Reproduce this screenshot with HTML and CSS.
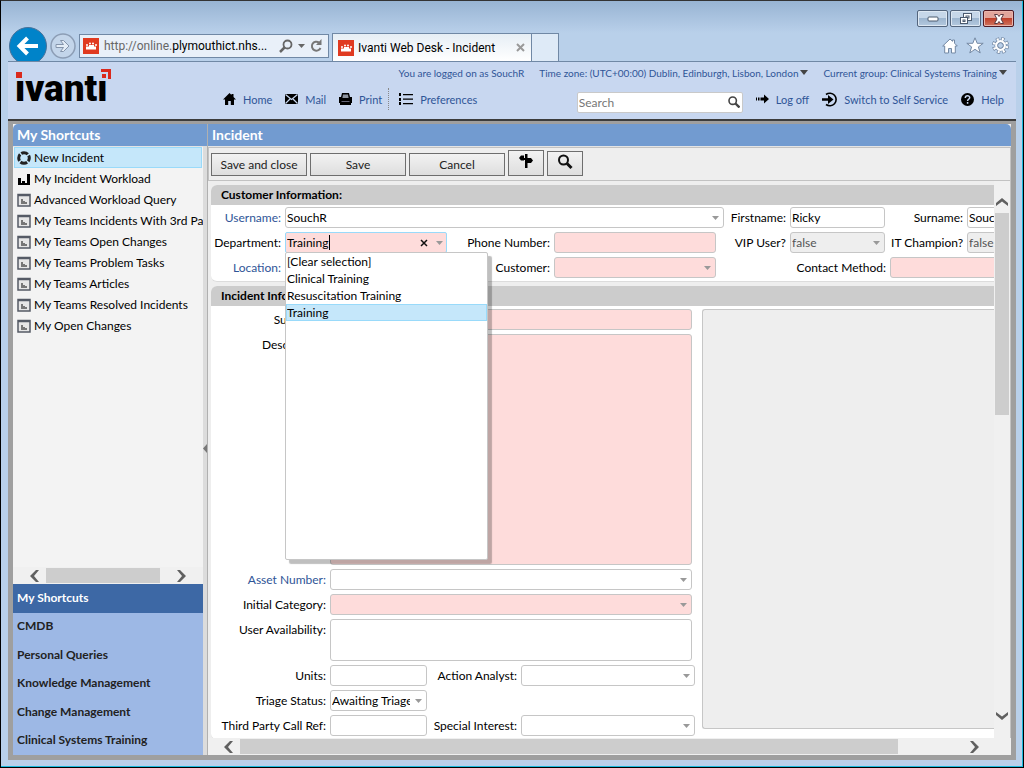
FILE: index.html
```html
<!DOCTYPE html>
<html lang="en">
  <head>
    <meta charset="UTF-8" />
    <meta name="viewport" content="width=device-width, initial-scale=1.0" />
    <title>Ivanti Web Desk - Incident</title>
    <link rel="stylesheet" href="styles.css">
  </head>
  <body>
    <div class="window">
      <div class="chrome">
        <div class="window-buttons">
          <button class="win-btn" aria-label="Minimize">
            <svg width="12" height="6"><rect x="1" y="1" width="10" height="4" rx="1" fill="#fff" stroke="#4b5a6e" /></svg>
          </button>
          <button class="win-btn" aria-label="Restore">
            <svg width="14" height="12" fill="#fff" stroke="#4b5a6e"><rect x="4.5" y=".5" width="8" height="7" /><rect x="7" y="3" width="3" height="2" /><rect x="1.500" y="4.500" width="7" height="6" /><rect x="4" y="7" width="2" height="1.500" /></svg>
          </button>
          <button class="win-btn win-close" aria-label="Close">
            <svg width="14" height="12"><path d="M2.500 1.500h3L7 3.500l1.500-2h3L9 6l2.500 4.500h-3L7 8.500l-1.500 2h-3L5 6z" fill="#fff" stroke="#5a3a42" /></svg>
          </button>
        </div>
        <div class="nav-row">
          <button class="back" aria-label="Back">
            <svg width="38" height="38" viewBox="0 0 38 38"><circle cx="19" cy="19" r="18.500" fill="#0083c9" stroke="#48729a" /><path d="M29 19H11M18.500 11l-8 8 8 8" fill="none" stroke="#fff" stroke-width="4" /></svg>
          </button>
          <button class="forward" aria-label="Forward">
            <svg width="26" height="26" viewBox="0 0 26 26"><circle cx="13" cy="13" r="12" fill="#c3d5ea" stroke="#8c9db5" stroke-width="1.500" /><path d="M6 11.500h7.500l-3-4h3l5.500 5.500-5.500 5.500h-3l3-4H6z" fill="#e4edf7" stroke="#8494ab" /></svg>
          </button>
          <div class="address">
            <svg class="favicon" width="16" height="16"><rect width="16" height="16" fill="#e03a20" /><g fill="#fff"><circle cx="4" cy="7" r="1" /><circle cx="7" cy="5.500" r="1" /><circle cx="10" cy="5.500" r="1" /><circle cx="13" cy="7" r="1" /><path d="M3 8.500h10v3H3zM6 7h5v3H6z" /></g></svg>
            <span class="url">http://online.<b>plymouthict.nhs...</b></span>
            <svg width="14" height="14" viewBox="0 0 14 14" fill="none" stroke="#666"><circle cx="8.500" cy="5.500" r="4" stroke-width="1.800" /><path d="M5.500 8.500L1 13" stroke-width="2.500" /></svg>
            <svg width="7" height="4"><path d="M0 0h7L3.500 4z" fill="#666" /></svg>
            <svg width="13" height="14" viewBox="0 0 13 14"><path d="M9 3.500A4.500 4.500 0 1 0 10.500 9" fill="none" stroke="#777" stroke-width="2" /><path d="M11.500 0v6H6z" fill="#777" /></svg>
          </div>
          <div class="tab">
            <svg class="favicon" width="16" height="16"><rect width="16" height="16" fill="#e03a20" /><g fill="#fff"><circle cx="4" cy="7" r="1" /><circle cx="7" cy="5.500" r="1" /><circle cx="10" cy="5.500" r="1" /><circle cx="13" cy="7" r="1" /><path d="M3 8.500h10v3H3zM6 7h5v3H6z" /></g></svg>
            <span class="tab-title">Ivanti Web Desk - Incident</span>
            <button class="plain" aria-label="Close tab"><svg width="9" height="9"><path d="M1 1l7 7M8 1L1 8" stroke="#999" stroke-width="2" /></svg></button>
          </div>
          <button class="new-tab" aria-label="New tab"></button>
          <div class="browser-tools">
            <button class="plain" aria-label="Home page"><svg width="16" height="16" viewBox="0 0 16 16"><path d="M8 1L.7 8h2v7h3.800v-4.500h3V15h3.800V8h2L12.500 5.200V2h-2v1.300z" fill="#fff" stroke="#7388a3" /></svg></button>
            <button class="plain" aria-label="Favorites"><svg width="18" height="17" viewBox="0 0 18 17"><path d="M9 .8l2.200 5.500h6l-4.800 3.600 1.800 6L9 12.300l-5.200 3.600 1.800-6L.8 6.300h6z" fill="#fff" stroke="#7388a3" /></svg></button>
            <button class="plain" aria-label="Tools"><svg width="17" height="17" viewBox="0 0 17 17"><circle cx="8.500" cy="8.500" r="6.500" fill="none" stroke="#7388a3" stroke-width="4" stroke-dasharray="3.105 2" /><circle cx="8.500" cy="8.500" r="6" fill="#7388a3" /><circle cx="8.500" cy="8.500" r="6.500" fill="none" stroke="#fff" stroke-width="2.600" stroke-dasharray="1.900 3.205" stroke-dashoffset="-.6" /><circle cx="8.500" cy="8.500" r="4.200" fill="none" stroke="#fff" stroke-width="2.400" /><circle cx="8.500" cy="8.500" r="2.800" fill="#b9cfe9" stroke="#7388a3" /></svg></button>
          </div>
        </div>
      </div>

      <div class="page">
        <header class="header">
          <svg class="logo" width="100" height="44" viewBox="0 0 100 44">
            <text x="0" y="34" class="logo-text">ivanti</text>
            <rect x="0" y="2" width="9" height="11" fill="#c8d7f0" />
            <rect x="83" y="0" width="15" height="13" fill="#c8d7f0" />
            <rect x="1" y="5" width="6" height="6" fill="#da291c" />
            <path d="M86 2h10v10h-3V5h-7zM87 7h4v4h-4z" fill="#da291c" />
          </svg>
          <div class="header-main">
            <div class="status">
              <span>You are logged on as SouchR</span>
              <button class="status-menu">Time zone: (UTC+00:00) Dublin, Edinburgh, Lisbon, London<svg width="8" height="5"><path d="M0 0h8L4 5z" fill="#444" /></svg></button>
              <button class="status-menu">Current group: Clinical Systems Training<svg width="8" height="5"><path d="M0 0h8L4 5z" fill="#444" /></svg></button>
            </div>
            <nav class="links">
              <a href="#"><svg width="13" height="12" viewBox="0 0 13 12"><path d="M6.500 0L0 6.500h2V12h3.200V8h2.600v4H11V6.500h2L10.500 4V1h-2v1z" /></svg>Home</a>
              <a href="#"><svg width="13" height="10" viewBox="0 0 13 10"><path d="M0 0h13v10H0z" /><path d="M.5.500l6 5 6-5M.5 9.500L5 5M12.500 9.500L8 5" fill="none" stroke="#c8d7f0" stroke-width="1.200" /></svg>Mail</a>
              <a href="#"><svg width="13" height="12" viewBox="0 0 13 12"><path d="M3 0h7l1 4h2v6h-1v2H1v-2H0V4h2z" /><path d="M4 1.500h5l.6 3.500H3.400z" fill="#8d949f" /><path d="M2.500 8.500h8" stroke="#667" /></svg>Print</a>
              <span class="divider"></span>
              <a href="#"><svg width="15" height="12" viewBox="0 0 15 12"><path d="M1 0h2v3H1zM1 5h2v3H1zM1 9h2v3H1zM5 1h10v1.300H5zM5 5.500h10v1.300H5zM5 10h10v1.300H5z" /></svg>Preferences</a>
              <div class="search">
                <input type="search" aria-label="Search" placeholder="Search" />
                <button class="plain" aria-label="Run search"><svg width="12" height="12" viewBox="0 0 12 12" fill="none" stroke="#444"><circle cx="4.700" cy="4.700" r="3.700" stroke-width="1.600" /><path d="M7.500 7.500l4 4" stroke-width="2.400" /></svg></button>
              </div>
              <a href="#"><svg width="13" height="10" viewBox="0 0 13 10"><path d="M0 3.500h1v3H0zM2 3.500h1.500v3H2zM4.500 3.500H8V.5L13 5 8 9.500v-3H4.500z" /></svg>Log off</a>
              <a href="#"><svg width="15" height="15" viewBox="0 0 15 15"><path d="M4 2.500A6.300 6.300 0 1 1 4 12.500" fill="none" stroke="#000" stroke-width="1.600" /><path d="M0 6.300h6V3l5.500 4.500L6 12V8.700H0z" /></svg>Switch to Self Service</a>
              <a href="#"><svg width="13" height="13" viewBox="0 0 13 13"><circle cx="6.500" cy="6.500" r="6.500" /><path d="M4.300 5c0-3 4.600-2.800 4.400-.3C8.600 6.300 6.600 6 6.600 8M6.600 9v1.700" fill="none" stroke="#c8d7f0" stroke-width="1.500" /></svg>Help</a>
            </nav>
          </div>
        </header>

        <div class="workspace">
          <aside class="sidebar">
            <h2 class="title">My Shortcuts</h2>
            <ul class="shortcuts">
              <li class="selected"><a href="#"><svg width="14" height="14" viewBox="0 0 14 14"><circle cx="7" cy="7" r="5.300" fill="none" stroke="#222" stroke-width="3" stroke-dasharray="7 1.325" stroke-dashoffset="3.500" /></svg>New Incident</a></li>
              <li><a href="#"><svg width="14" height="14" viewBox="0 0 14 14"><path d="M1 6h3v5h1V9h3v2h2V2h3v11H1z" /></svg>My Incident Workload</a></li>
              <li><a href="#"><svg width="14" height="14" viewBox="0 0 14 14"><use href="#query" /></svg>Advanced Workload Query</a></li>
              <li><a href="#"><svg width="14" height="14" viewBox="0 0 14 14"><use href="#query" /></svg>My Teams Incidents With 3rd Party</a></li>
              <li><a href="#"><svg width="14" height="14" viewBox="0 0 14 14"><use href="#query" /></svg>My Teams Open Changes</a></li>
              <li><a href="#"><svg width="14" height="14" viewBox="0 0 14 14"><use href="#query" /></svg>My Teams Problem Tasks</a></li>
              <li><a href="#"><svg width="14" height="14" viewBox="0 0 14 14"><use href="#query" /></svg>My Teams Articles</a></li>
              <li><a href="#"><svg width="14" height="14" viewBox="0 0 14 14"><use href="#query" /></svg>My Teams Resolved Incidents</a></li>
              <li><a href="#"><svg width="14" height="14" viewBox="0 0 14 14"><use href="#query" /></svg>My Open Changes</a></li>
            </ul>
            <div class="scroll-x side-scroll">
              <button class="plain" aria-label="Scroll left"><svg width="9" height="12"><use href="#chevron-left" /></svg></button>
              <div class="track"><div class="thumb"></div></div>
              <button class="plain" aria-label="Scroll right"><svg width="9" height="12"><use href="#chevron-right" /></svg></button>
            </div>
            <nav class="groups">
              <a href="#" class="current">My Shortcuts</a>
              <a href="#">CMDB</a>
              <a href="#">Personal Queries</a>
              <a href="#">Knowledge Management</a>
              <a href="#">Change Management</a>
              <a href="#">Clinical Systems Training</a>
            </nav>
          </aside>

          <button class="splitter" aria-label="Collapse sidebar"><svg width="4" height="9"><path d="M4 0v9L0 4.500z" fill="#777" /></svg></button>

          <main class="main">
            <h1 class="title">Incident</h1>
            <div class="toolbar">
              <button class="action">Save and close</button>
              <button class="action">Save</button>
              <button class="action">Cancel</button>
              <button class="action icon-action tall" aria-label="Actions"><svg width="16" height="16" viewBox="0 0 16 16"><path d="M1 4l2-2.500h3v5H3zM7 0h2.500v4H13l2 2.500L13 9H9.500v5H7V6H5V4h2z" /></svg></button>
              <button class="action icon-action" aria-label="Find"><svg width="16" height="16" viewBox="0 0 16 16" fill="none" stroke="#111"><circle cx="6.500" cy="6" r="4.500" stroke-width="2" /><path d="M10 9.500l4.500 4.500" stroke-width="3" /></svg></button>
            </div>
            <div class="form-area">
              <form class="form">
                <section class="panel">
                  <h3>Customer Information:</h3>
                  <div class="fields customer">
                    <div class="row">
                      <label class="link l-first" for="username">Username:</label>
                      <select id="username" class="w-user"><option>SouchR</option></select>
                      <label class="l-firstname" for="firstname">Firstname:</label>
                      <input id="firstname" class="w-short" type="text" value="Ricky" />
                      <label class="l-surname" for="surname">Surname:</label>
                      <input id="surname" class="w-med" type="text" value="Souch" />
                    </div>
                    <div class="row">
                      <label class="l-first" for="department">Department:</label>
                      <div class="combo w-med">
                        <input id="department" type="text" value="Training" role="combobox" aria-expanded="true" aria-controls="department-list" />
                        <span class="caret"></span>
                        <button type="button" class="plain" aria-label="Clear"><svg width="8" height="8"><path d="M1 1l6 6M7 1L1 7" stroke="#111" stroke-width="1.500" /></svg></button>
                        <svg width="7" height="4"><path d="M0 0h7L3.500 4z" fill="#999" /></svg>
                        <ul id="department-list" class="options" role="listbox">
                          <li role="option">[Clear selection]</li>
                          <li role="option">Clinical Training</li>
                          <li role="option">Resuscitation Training</li>
                          <li role="option" class="active" aria-selected="true">Training</li>
                        </ul>
                      </div>
                      <label class="l-second" for="phone">Phone Number:</label>
                      <input id="phone" class="w-med required" type="text" />
                      <label class="l-vip" for="vip">VIP User?</label>
                      <select id="vip" class="w-short readonly"><option>false</option></select>
                      <label class="l-surname" for="champion">IT Champion?</label>
                      <select id="champion" class="w-med readonly"><option>false</option></select>
                    </div>
                    <div class="row">
                      <label class="link l-first" for="location">Location:</label>
                      <select id="location" class="w-med"><option></option></select>
                      <label class="l-second" for="customer">Customer:</label>
                      <select id="customer" class="w-med required"><option></option></select>
                      <label class="l-contact" for="contact">Contact Method:</label>
                      <select id="contact" class="w-med required"><option></option></select>
                    </div>
                  </div>
                </section>

                <section class="panel">
                  <h3>Incident Information:</h3>
                  <div class="fields incident">
                    <div class="column">
                      <div class="row">
                        <label class="l-wide" for="summary">Summary:</label>
                        <input id="summary" class="w-wide required" type="text" />
                      </div>
                      <div class="row">
                        <label class="l-wide" for="description">Description:</label>
                        <textarea id="description" class="w-wide description required"></textarea>
                      </div>
                      <div class="row">
                        <label class="link l-wide" for="asset">Asset Number:</label>
                        <select id="asset" class="w-wide"><option></option></select>
                      </div>
                      <div class="row">
                        <label class="l-wide" for="category">Initial Category:</label>
                        <select id="category" class="w-wide required"><option></option></select>
                      </div>
                      <div class="row">
                        <label class="l-wide" for="availability">User Availability:</label>
                        <textarea id="availability" class="w-wide availability"></textarea>
                      </div>
                      <div class="row">
                        <label class="l-wide" for="units">Units:</label>
                        <input id="units" class="w-unit" type="text" />
                        <label class="l-analyst" for="analyst">Action Analyst:</label>
                        <select id="analyst" class="w-analyst"><option></option></select>
                      </div>
                      <div class="row">
                        <label class="l-wide" for="triage">Triage Status:</label>
                        <select id="triage" class="w-unit"><option>Awaiting Triage</option></select>
                      </div>
                      <div class="row">
                        <label class="l-wide" for="callref">Third Party Call Ref:</label>
                        <input id="callref" class="w-unit" type="text" />
                        <label class="l-analyst" for="interest">Special Interest:</label>
                        <select id="interest" class="w-analyst"><option></option></select>
                      </div>
                    </div>
                    <textarea class="notes readonly" aria-label="Notes" readonly></textarea>
                  </div>
                </section>
              </form>
              <div class="scroll-y">
                <button class="plain" aria-label="Scroll up"><svg width="12" height="9"><path d="M0 8V5l6-5 6 5v3L6 3.500z" fill="#606060" /></svg></button>
                <div class="track"><div class="thumb"></div></div>
                <button class="plain" aria-label="Scroll down"><svg width="12" height="9"><path d="M0 0v3l6 5 6-5V0L6 4.500z" fill="#606060" /></svg></button>
              </div>
            </div>
            <div class="scroll-x main-scroll">
              <button class="plain" aria-label="Scroll left"><svg width="9" height="12"><use href="#chevron-left" /></svg></button>
              <div class="track"><div class="thumb"></div></div>
              <button class="plain" aria-label="Scroll right"><svg width="9" height="12"><use href="#chevron-right" /></svg></button>
            </div>
          </main>
        </div>
      </div>
    </div>

    <svg class="symbols" width="0" height="0">
      <symbol id="query" viewBox="0 0 14 14"><path d="M1 1.500h12v11.500H1z" fill="#e6e6e6" stroke="#555b66" stroke-width="1.500" /><path d="M1 2.500h12" stroke="#555b66" stroke-width="1.500" /><path d="M4 6h2v2h2v1h2v2H4z" fill="#777" /></symbol>
      <symbol id="chevron-left" viewBox="0 0 9 12"><path d="M9 0H6L0 6l6 6h3L4 6z" fill="#606060" /></symbol>
      <symbol id="chevron-right" viewBox="0 0 9 12"><path d="M0 0h3l6 6-6 6H0l5-6z" fill="#606060" /></symbol>
    </svg>
  </body>
</html>
```
FILE: styles.css
```css
* {
  box-sizing: border-box;
}
body {
  margin: 0;
  font-family: Lato, 'Noto Sans', sans-serif;
  font-size: 12px;
  color: #000;
  overflow: hidden;
}
ul {
  list-style: none;
  margin: 0;
  padding: 0;
}
a {
  color: inherit;
  text-decoration: none;
}
svg {
  flex: none;
}
button {
  font-family: inherit;
  color: inherit;
  padding: 0;
}
.plain {
  display: flex;
  flex: none;
  background: none;
  border: none;
}
.symbols {
  position: absolute;
}

/* browser window */
.window {
  height: 100vh;
  display: flex;
  flex-direction: column;
  padding: 0 7px 7px;
  background: linear-gradient(#98b4d3, #b9d0ea 32px, #b9d0ea);
  border: 1px solid #000;
  border-top-color: #333;
  box-shadow: inset -1px -1px #19b9dc;
}
.chrome {
  flex: none;
  height: 61px;
  border-bottom: 1px solid #7088a5;
}
.window-buttons {
  display: flex;
  justify-content: flex-end;
  gap: 2px;
  height: 32px;
  padding: 9px 2px 0 0;
}
.win-btn {
  display: flex;
  align-items: center;
  justify-content: center;
  width: 31px;
  height: 17px;
  background: linear-gradient(#c6d7e9 50%, #9db6d0 50%, #b4c9df);
  border: 1px solid #53657d;
  border-radius: 2px;
  box-shadow: inset 0 0 0 1px #dde8f3;
}
.win-close {
  background: linear-gradient(#e2a59b 50%, #c0402b 50%, #cf7560);
  border-color: #4f1a24;
  box-shadow: inset 0 0 0 1px #e9b5ac;
}
.nav-row {
  display: flex;
  align-items: flex-end;
  height: 28px;
}
.back {
  align-self: flex-end;
  height: 34px;
  margin-left: 1px;
  overflow: hidden;
  background: none;
  border: none;
}
.forward {
  width: 26px;
  height: 26px;
  margin: 0 3px 2px;
  background: none;
  border: none;
}
.address {
  display: flex;
  align-items: center;
  gap: 5px;
  width: 250px;
  height: 24px;
  margin: 0 3px 3px 0;
  padding: 0 5px 0 3px;
  background: #e9f0f9;
  border: 1px solid #7088a5;
  font: 12px Roboto, sans-serif;
  color: #666;
}
.url {
  flex: 1;
  white-space: nowrap;
}
.url b {
  font-weight: 400;
  color: #000;
}
.tab {
  display: flex;
  align-items: center;
  gap: 4px;
  width: 200px;
  height: 28px;
  padding: 0 6px 0 5px;
  background: linear-gradient(#e6eef5, #fff);
  border: 1px solid #7088a5;
  border-bottom: none;
  font: 12px Roboto, sans-serif;
}
.tab-title {
  flex: 1;
  white-space: nowrap;
}
.new-tab {
  width: 27px;
  height: 28px;
  background: #deeaf7;
  border: 1px solid #7088a5;
  border-width: 1px 1px 0 0;
}
.browser-tools {
  display: flex;
  align-items: center;
  gap: 8px;
  margin: 0 7px 7px auto;
}

/* page header */
.page {
  flex: 1;
  min-height: 0;
  display: flex;
  flex-direction: column;
}
.header {
  display: flex;
  flex: none;
  height: 59px;
  padding: 0 9px 0 7px;
  background: #c8d7f0;
  border-bottom: 2px solid #3c3c3c;
  color: #2f5597;
  font-size: 11px;
}
.logo {
  margin-top: 5px;
}
.logo-text {
  font: 900 37px Roboto, sans-serif;
  fill: #000;
}
.header-main {
  flex: 1;
  display: flex;
  flex-direction: column;
  align-items: stretch;
  margin-left: 108px;
}
.status {
  display: flex;
  justify-content: flex-end;
  align-items: center;
  gap: 15px;
  height: 21px;
  font-size: 10px;
  white-space: nowrap;
}
.status-menu {
  display: flex;
  align-items: center;
  gap: 2px;
  background: none;
  border: none;
  font-size: 10px;
}
.links {
  display: flex;
  align-items: center;
  gap: 13px;
  height: 32px;
  padding-right: 3px;
  white-space: nowrap;
}
.links a {
  display: flex;
  align-items: center;
  gap: 7px;
}
.divider {
  height: 22px;
  margin: 0 -4px 0 -7px;
  border-left: 1px dotted #888;
}
.search {
  display: flex;
  align-items: center;
  width: 166px;
  height: 21px;
  margin: 6px 0 0 auto;
  padding: 0 2px 0 1px;
  background: #fff;
  border: 1px solid #c9c9c9;
  border-radius: 2px;
}
.search input {
  flex: 1;
  min-width: 0;
  padding: 0;
  border: none;
  background: none;
  font: 12px Lato, sans-serif;
}
.search input::placeholder {
  color: #767676;
}

/* workspace */
.workspace {
  flex: 1;
  min-height: 0;
  display: flex;
  padding: 3px 5px 5px;
  background: #9f9f9f;
}
.title {
  flex: none;
  margin: 0;
  padding-left: 4px;
  height: 23px;
  line-height: 22px;
  background: #729bd0;
  border-bottom: 1px solid #e4e4e4;
  color: #fff;
  font-size: 14px;
  font-weight: 700;
}
.sidebar {
  display: flex;
  flex-direction: column;
  width: 190px;
  background: #f3f3f3;
}
.sidebar .title {
  border-top-left-radius: 5px;
}
.shortcuts {
  flex: 1;
  padding: 0 1px;
  overflow: hidden;
}
.shortcuts a {
  display: flex;
  align-items: center;
  gap: 3px;
  height: 21px;
  padding-left: 2px;
  border: 1px solid transparent;
  white-space: nowrap;
}
.shortcuts .selected a {
  background: #c5e7fa;
  border-color: #99dafa;
}
.scroll-x {
  display: flex;
  align-items: center;
  flex: none;
  height: 17px;
  background: #f0f0f0;
}
.scroll-x .track {
  flex: 1;
  margin: 0 7px;
}
.thumb {
  background: #cdcdcd;
}
.scroll-x .thumb {
  height: 15px;
}
.side-scroll {
  padding: 0 17px;
}
.side-scroll .thumb {
  width: 92%;
}
.groups {
  display: flex;
  flex-direction: column;
  flex: none;
  height: 171px;
  background: #9db8e5;
  color: #222;
  font-weight: 700;
}
.groups a {
  display: flex;
  flex: 1;
  align-items: center;
  padding: 0 0 2px 4px;
}
.groups .current {
  background: #3d68a5;
  color: #fff;
}
.splitter {
  display: flex;
  align-items: center;
  width: 5px;
  padding-top: 18px;
  background: linear-gradient(#729bd0 22px, #dcdcdc 22px);
  border: none;
  border-right: 1px solid #b0b0b0;
}
.main {
  flex: 1;
  min-width: 0;
  display: flex;
  flex-direction: column;
  background: #eee;
}
.main .title {
  border-top-right-radius: 5px;
}
.toolbar {
  display: flex;
  flex: none;
  align-items: flex-end;
  gap: 3px;
  height: 34px;
  padding: 0 2px 4px;
  background: #eee;
  border: 1px solid #c2c2c2;
}
.action {
  width: 96px;
  height: 23px;
  background: linear-gradient(#f2f2f2, #dedede);
  border: 1px solid #6e6e6e;
  font-size: 12px;
  color: #222;
}
.icon-action {
  width: 36px;
  height: 25px;
}
.tall {
  height: 26px;
}

/* form */
.form-area {
  flex: 1;
  min-height: 0;
  display: flex;
}
.form {
  flex: 1;
  min-width: 0;
  padding: 4px 0 0 3px;
  overflow: hidden;
}
.panel {
  margin-bottom: 4px;
  background: #fff;
  border-radius: 6px 0 0 6px;
  border-bottom: 1px solid #dcdcdc;
}
.panel h3 {
  height: 20px;
  margin: 0;
  padding-left: 10px;
  line-height: 20px;
  background: #ccc;
  border-top-left-radius: 6px;
  font-size: 12px;
}
.fields {
  display: flex;
  flex-direction: column;
  gap: 4px;
  padding: 3px 0;
}
.customer {
  padding-top: 2px;
}
.incident {
  flex-direction: row;
  gap: 7px;
}
.column {
  display: flex;
  flex: none;
  flex-direction: column;
  gap: 4px;
  width: 484px;
}
.row {
  display: flex;
  gap: 4px;
}
.row label {
  flex: none;
  line-height: 21px;
  text-align: right;
  white-space: nowrap;
}
.row .link {
  color: #2f5597;
}
.l-first { width: 70px; }
.l-firstname { width: 58px; }
.l-surname { width: 74px; }
.l-second { width: 99px; }
.l-vip { width: 66px; }
.l-contact { width: 166px; }
.l-wide { width: 115px; }
.l-analyst { width: 86px; }
.w-user { width: 439px; }
.w-short { width: 95px; }
.w-med { width: 162px; }
.w-wide { width: 362px; }
.w-unit { width: 97px; }
.w-analyst { width: 174px; }
.fields input,
.fields select,
.fields textarea {
  flex: none;
  height: 21px;
  margin: 0;
  padding: 0 1px;
  background: #fff;
  border: 1px solid #c6c6c6;
  border-radius: 3px;
  color: #000;
  font: 12px Lato, sans-serif;
}
.fields select {
  appearance: none;
  padding-right: 16px;
  background: #fff url("data:image/svg+xml,%3Csvg xmlns='http://www.w3.org/2000/svg' width='7' height='4'%3E%3Cpath d='M0 0h7L3.500 4z' fill='%23999'/%3E%3C/svg%3E") no-repeat right 4px center;
}
.fields .required {
  background-color: #fedcdb;
}
.fields .readonly {
  background-color: #eee;
  color: #555;
}
.fields textarea {
  resize: none;
}
.fields .description {
  height: 231px;
}
.fields .availability {
  height: 42px;
}
.fields .notes {
  flex: 1;
  height: 420px;
  border-right: none;
  border-radius: 3px 0 0 3px;
}
.combo {
  position: relative;
  display: flex;
  flex: none;
  align-items: center;
  gap: 8px;
  height: 21px;
  padding-right: 3px;
  background: #fedcdb;
  border: 1px solid #99dafa;
  border-radius: 2px;
}
.combo input {
  flex: 1;
  min-width: 0;
  height: 19px;
  background: none;
  border: none;
}
/* text cursor after the typed value */
.caret {
  position: absolute;
  left: 43px;
  top: 2px;
  height: 15px;
  border-left: 1px solid #000;
}
.options {
  position: absolute;
  z-index: 1;
  top: 19px;
  left: -1px;
  width: 203px;
  height: 308px;
  background: #fff;
  border: 1px solid #c6c6c6;
  border-radius: 2px;
  box-shadow: 4px 4px 1px rgba(0, 0, 0, 0.25);
}
.options li {
  height: 17px;
  padding-left: 1px;
  line-height: 17px;
}
.options .active {
  background: #c5e7fa;
  outline: 1px solid #99dafa;
  outline-offset: -1px;
}
.scroll-y {
  display: flex;
  flex-direction: column;
  align-items: center;
  width: 17px;
  padding: 17px 0;
  background: #f0f0f0;
  border-right: 1px solid #c2c2c2;
}
.scroll-y .track {
  flex: 1;
  width: 14px;
  margin: 6px 0;
}
.scroll-y .thumb {
  height: 41%;
}
.main-scroll {
  padding: 0 32px 0 16px;
}
.main-scroll .thumb {
  width: 91%;
}
```
